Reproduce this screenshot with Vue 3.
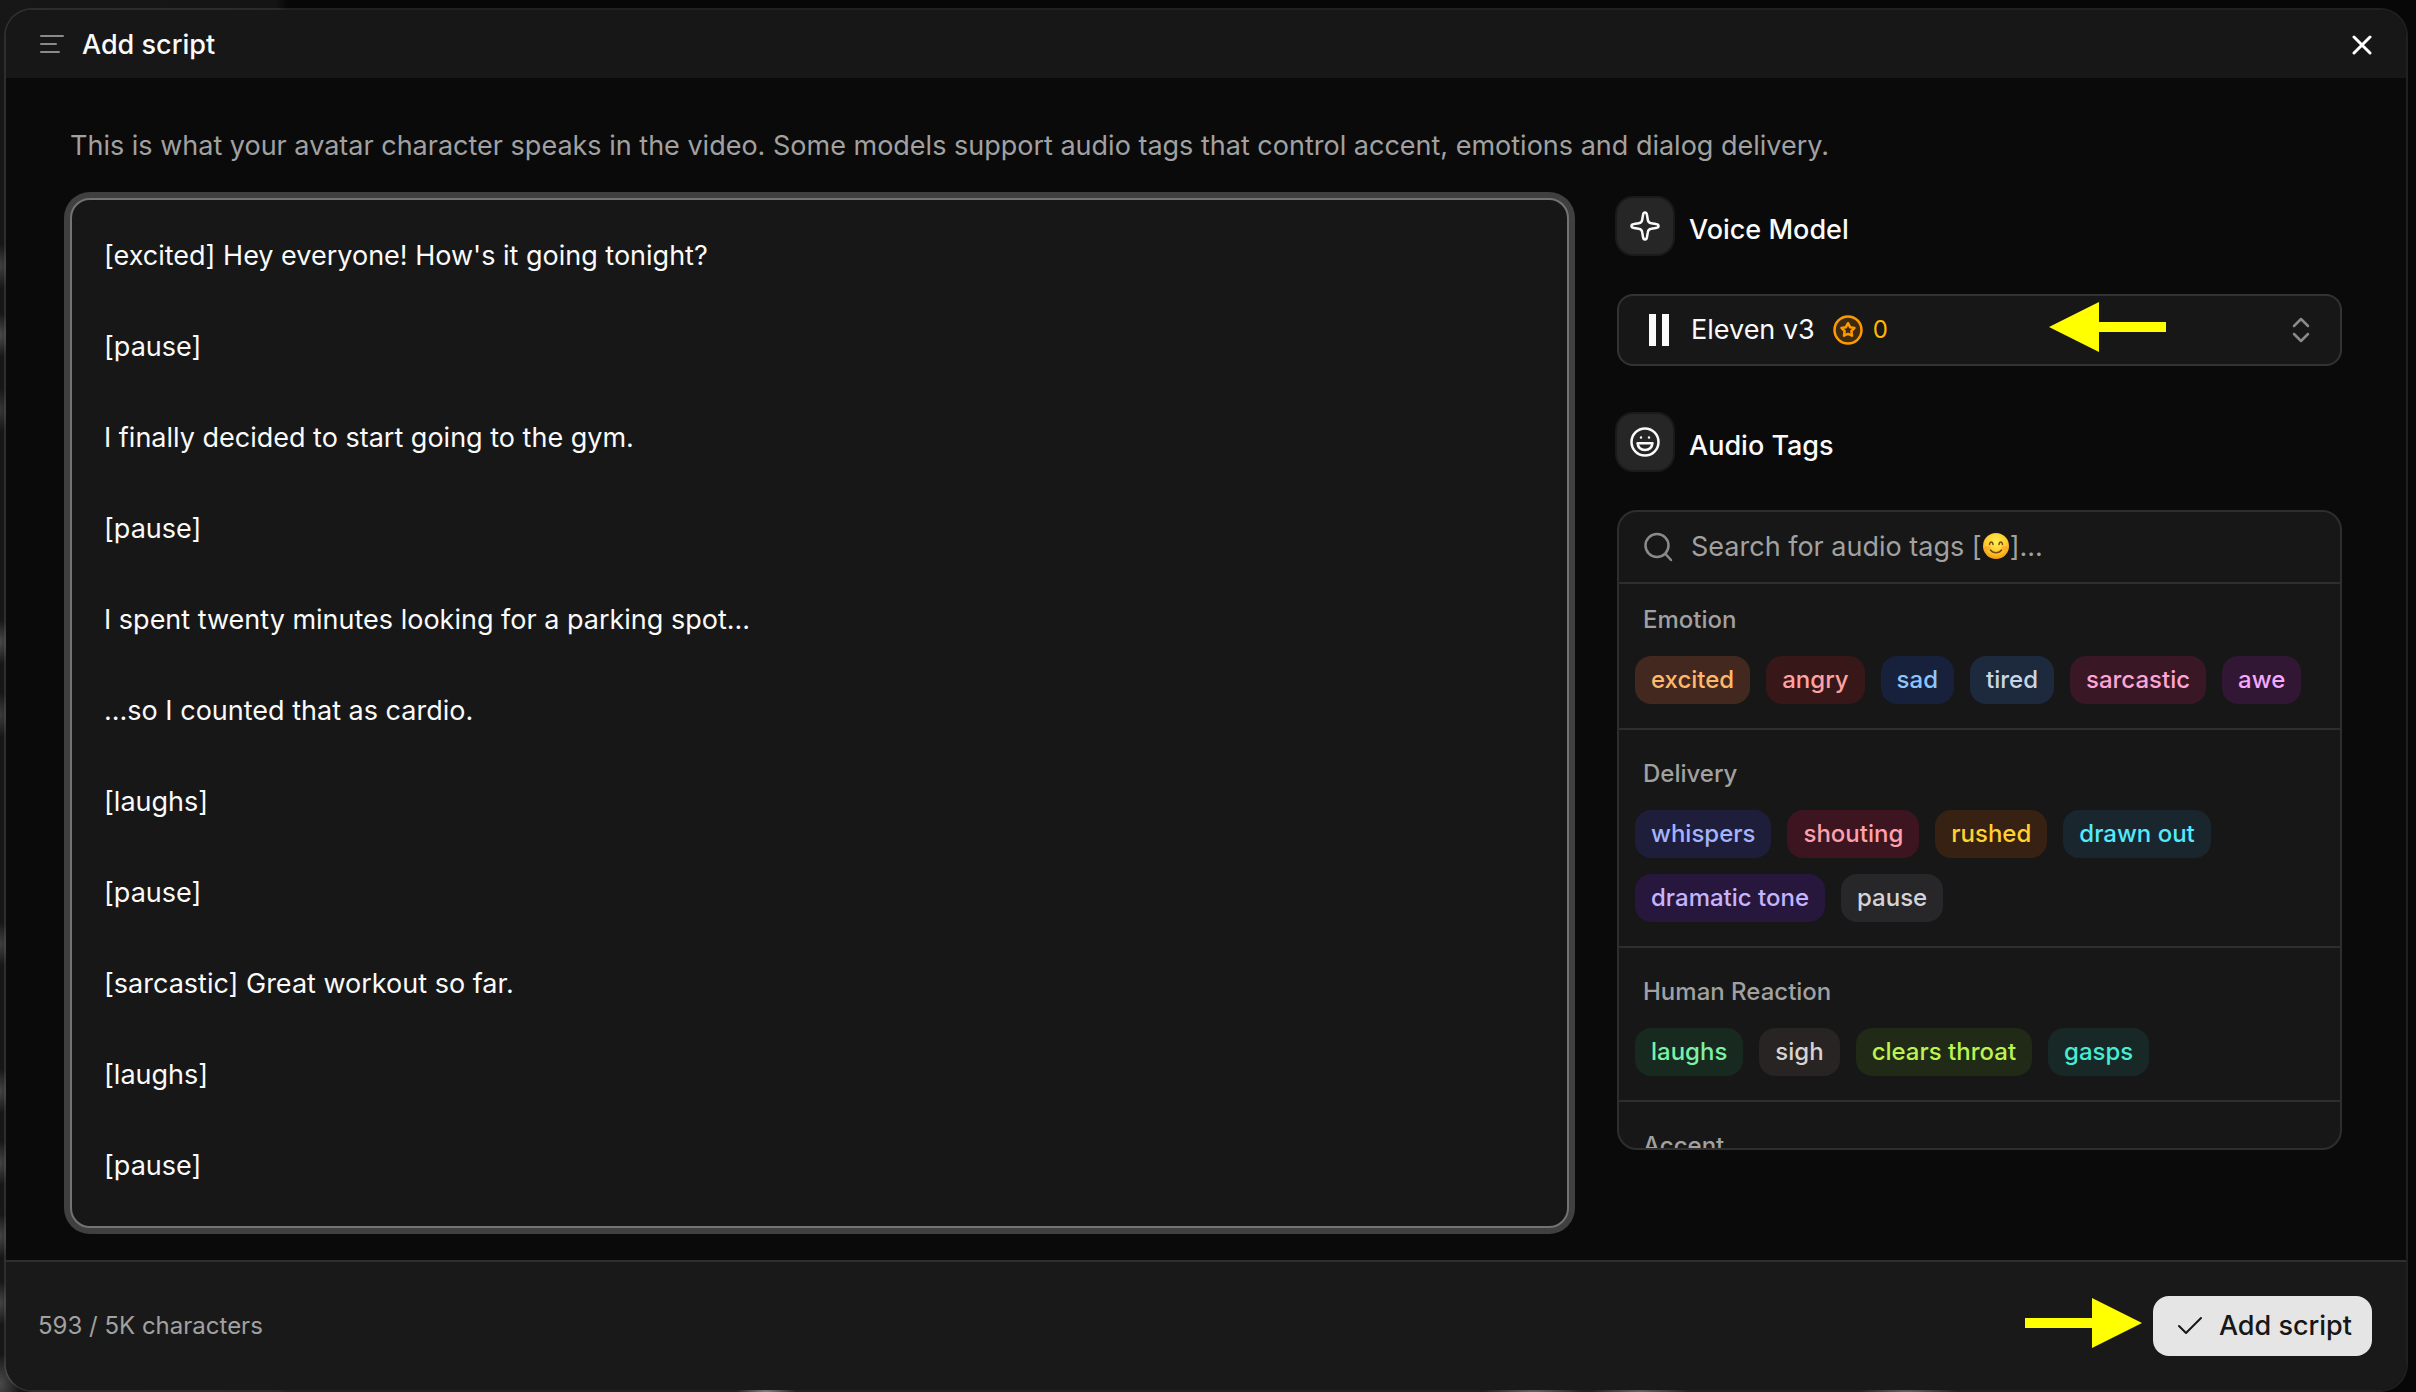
<script setup>
import { ref } from 'vue'

const script = ref([
  '[excited] Hey everyone! How\'s it going tonight?',
  '[pause]',
  'I finally decided to start going to the gym.',
  '[pause]',
  'I spent twenty minutes looking for a parking spot...',
  '...so I counted that as cardio.',
  '[laughs]',
  '[pause]',
  '[sarcastic] Great workout so far.',
  '[laughs]',
  '[pause]',
].join('\n'))

const query = ref('')

const groups = [
  { name: 'Emotion', tags: [['excited', 'orange'], ['angry', 'red'], ['sad', 'blue'], ['tired', 'slate'], ['sarcastic', 'pink'], ['awe', 'fuchsia']] },
  { name: 'Delivery', tags: [['whispers', 'indigo'], ['shouting', 'rose'], ['rushed', 'amber'], ['drawn out', 'cyan'], ['dramatic tone', 'violet'], ['pause', 'zinc']] },
  { name: 'Human Reaction', tags: [['laughs', 'green'], ['sigh', 'stone'], ['clears throat', 'lime'], ['gasps', 'teal']] },
  { name: 'Accent', tags: [] },
]
</script>

<template>
  <div class="backdrop">
    <section class="dialog" role="dialog" aria-labelledby="dialog-title">
      <header class="top">
        <svg class="menu" width="24" height="28" viewBox="0 0 24 28" aria-hidden="true">
          <path d="M1 5H23M1 13H16M1 21H19" />
        </svg>
        <h1 id="dialog-title">Add script</h1>
        <button class="close" type="button" aria-label="Close">
          <svg width="20" height="20" viewBox="0 0 20 20"><path d="M2 2L18 18M18 2L2 18" /></svg>
        </button>
      </header>

      <main class="body">
        <label class="intro" for="script">This is what your avatar character speaks in the video. Some models support audio tags that control accent, emotions and dialog delivery.</label>
        <div class="columns">
          <textarea id="script" v-model="script" class="editor" spellcheck="false"></textarea>

          <aside class="side">
            <div class="heading">
              <span class="badge">
                <svg width="32" height="32" viewBox="0 0 32 32" aria-hidden="true">
                  <path d="M16 2.500C17.300 2.500 17.800 3.600 18 5L18.800 9.800C19.100 12 20 12.900 22.200 13.200L27 14C28.400 14.200 29.500 14.700 29.500 16S28.400 17.800 27 18L22.200 18.800C20 19.100 19.100 20 18.800 22.200L18 27C17.800 28.400 17.300 29.500 16 29.500S14.200 28.400 14 27L13.200 22.200C12.900 20 12 19.100 9.800 18.800L5 18C3.600 17.800 2.500 17.300 2.500 16S3.600 14.200 5 14L9.800 13.200C12 12.900 12.900 12 13.200 9.800L14 5C14.200 3.600 14.700 2.500 16 2.500Z" />
                </svg>
              </span>
              <h2>Voice Model</h2>
            </div>

            <button class="model" type="button">
              <svg class="bars" width="20" height="32" viewBox="0 0 20 32" aria-hidden="true"><path d="M0 0H7V32H0ZM13 0H20V32H13Z" /></svg>
              <span>Eleven v3</span>
              <svg class="coin" width="30" height="30" viewBox="0 0 30 30" aria-hidden="true">
                <circle cx="15" cy="15" r="13.5" />
                <path d="M15 8.200L17.100 12.200L21.500 13L18.400 16.200L19 20.700L15 18.800L11 20.700L11.600 16.200L8.500 13L12.900 12.200Z" />
              </svg>
              <span class="cost">0</span>
              <svg class="updown" width="18" height="26" viewBox="0 0 18 26" aria-hidden="true"><path d="M2 9L9 2L16 9M2 17L9 24L16 17" /></svg>
              <svg class="pointer pointer-left" width="117" height="50" viewBox="0 0 117 50" aria-hidden="true"><path d="M0 25L50 0V20H117V30H50V50Z" /></svg>
            </button>

            <div class="heading">
              <span class="badge">
                <svg width="32" height="32" viewBox="0 0 32 32" aria-hidden="true">
                  <circle cx="16" cy="16" r="13.5" />
                  <path d="M8.500 17.200H23.500C23 21.500 20 24 16 24S9 21.500 8.500 17.200Z" />
                  <path d="M12 11.500V11.600M20 11.500V11.600" />
                </svg>
              </span>
              <h2>Audio Tags</h2>
            </div>

            <div class="panel">
              <div class="search">
                <svg class="lens" width="30" height="30" viewBox="0 0 30 30" aria-hidden="true"><circle cx="14" cy="13.5" r="11.5" /><path d="M22.500 22L28 28" /></svg>
                <div class="field">
                  <input v-model="query" type="text" aria-label="Search for audio tags" />
                  <span v-if="!query" class="hint">Search for audio tags [<svg width="28" height="28" viewBox="0 0 28 28" aria-hidden="true">
                    <defs>
                      <radialGradient id="face" cx="50%" cy="35%" r="65%">
                        <stop offset="0" stop-color="#ffee58" />
                        <stop offset="0.6" stop-color="#ffcd2e" />
                        <stop offset="1" stop-color="#f39a12" />
                      </radialGradient>
                    </defs>
                    <circle cx="14" cy="14" r="13" fill="url(#face)" />
                    <ellipse cx="5.5" cy="16" rx="3" ry="2" fill="#ff8a3c" opacity="0.5" />
                    <ellipse cx="22.5" cy="16" rx="3" ry="2" fill="#ff8a3c" opacity="0.5" />
                    <path d="M7.500 12.500C8 9 10.500 9 11 12.500M17 12.500C17.500 9 20 9 20.500 12.500M8.500 18C11 21.500 17 21.500 19.500 18" fill="none" stroke="#7a4a10" stroke-width="1.5" stroke-linecap="round" />
                  </svg>]...</span>
                </div>
              </div>
              <div class="groups">
                <section v-for="group in groups" :key="group.name" class="group">
                  <h3>{{ group.name }}</h3>
                  <div class="tags">
                    <button v-for="[label, tone] in group.tags" :key="label" type="button" class="tag" :class="tone">{{ label }}</button>
                  </div>
                </section>
              </div>
            </div>
          </aside>
        </div>
      </main>

      <footer class="bottom">
        <span class="count">593 / 5K characters</span>
        <button class="submit" type="button">
          <svg width="26" height="20" viewBox="0 0 26 20" aria-hidden="true"><path d="M2 10L9 17L24 2" /></svg>
          Add script
          <svg class="pointer pointer-right" width="117" height="50" viewBox="0 0 117 50" aria-hidden="true"><path d="M117 25L67 0V20H0V30H67V50Z" /></svg>
        </button>
      </footer>
    </section>
  </div>
</template>

<style>
body {
  margin: 0;
  background: #0a0a0a;
}
</style>

<style scoped>
* {
  box-sizing: border-box;
}

.backdrop {
  min-height: 100vh;
  display: flex;
  padding: 8px 8px 0 4px;
  font: 400 27px/40px Inter, "Liberation Sans", sans-serif;
  color: #fafafa;
  background:
    radial-gradient(ellipse 12px 22px at 0 266px, #404040, transparent),
    radial-gradient(ellipse 12px 22px at 0 335px, #4a4a4a, transparent),
    radial-gradient(ellipse 12px 22px at 0 410px, #363636, transparent),
    radial-gradient(ellipse 12px 22px at 0 642px, #4a4a4a, transparent),
    radial-gradient(ellipse 12px 22px at 0 715px, #3c3c3c, transparent),
    radial-gradient(ellipse 12px 22px at 0 944px, #404040, transparent),
    radial-gradient(ellipse 12px 22px at 0 1091px, #444, transparent),
    radial-gradient(ellipse 12px 22px at 0 1163px, #444, transparent),
    radial-gradient(ellipse 12px 22px at 0 1236px, #444, transparent),
    radial-gradient(ellipse 12px 22px at 0 1303px, #444, transparent),
    radial-gradient(ellipse 20px 30px at 0 1384px, #4a4a4a, transparent),
    radial-gradient(ellipse 30px 8px at 766px 100%, #777, transparent),
    radial-gradient(ellipse 50px 8px at 1533px 100%, #555, transparent),
    radial-gradient(ellipse 50px 8px at 1640px 100%, #555, transparent),
    radial-gradient(ellipse 50px 8px at 1907px 100%, #555, transparent),
    linear-gradient(90deg, #171717 0, #141414 276px, #070707 288px);
}

h1, h2, h3 {
  margin: 0;
  font-weight: 500;
  font-size: 27px;
}

button, input, textarea {
  font: inherit;
  color: inherit;
}

button {
  cursor: pointer;
}

svg {
  flex: none;
  fill: none;
  stroke-linecap: round;
  stroke-linejoin: round;
}

.dialog {
  flex: 1;
  min-width: 0;
  display: flex;
  flex-direction: column;
  border: 2px solid rgba(255, 255, 255, 0.1);
  border-radius: 28px;
  background: #0a0a0a;
  background-clip: padding-box;
  overflow: hidden;
}

.top {
  display: flex;
  align-items: center;
  gap: 18px;
  height: 68px;
  padding: 2px 30px 0 34px;
  background: #171717;
}

.menu {
  stroke: #8a8a8a;
  stroke-width: 2;
}

.close {
  margin-left: auto;
  display: flex;
  padding: 4px;
  border: 0;
  background: none;
  stroke: #fff;
  stroke-width: 3;
}

.body {
  flex: 1;
  padding: 48px 64px 32px;
}

.intro {
  display: block;
  margin-bottom: 32px;
  color: #a1a1a1;
}

.columns {
  display: flex;
  gap: 48px;
}

.editor {
  flex: 1;
  min-width: 0;
  height: 1030px;
  padding: 10px 32px;
  border: 2px solid #737373;
  border-radius: 20px;
  outline: 0;
  box-shadow: 0 0 0 6px #404040;
  background: #171717;
  line-height: 91px;
  resize: none;
  overflow: hidden;
}

.side {
  flex: none;
  width: 725px;
}

.heading {
  display: flex;
  align-items: flex-end;
  gap: 16px;
  height: 56px;
}

.heading h2 {
  line-height: 48px;
}

.badge {
  display: flex;
  align-items: center;
  justify-content: center;
  width: 56px;
  height: 56px;
  border-radius: 16px;
  box-shadow: 0 0 0 2px #1a1a1a;
  background: #262626;
  stroke: #fafafa;
  stroke-width: 2.5;
}

.model {
  position: relative;
  display: flex;
  align-items: center;
  width: 100%;
  height: 72px;
  margin: 40px 0 48px;
  padding: 0 30px;
  border: 2px solid #333;
  border-radius: 16px;
  background: #171717;
  text-align: left;
}

.bars {
  margin-right: 22px;
  fill: #fafafa;
}

.coin {
  margin: 0 10px 0 18px;
  fill: #3d2a10;
  stroke: #fe9a00;
  stroke-width: 2.5;
}

.cost {
  font-size: 24px;
  color: #ffb900;
}

.updown {
  margin-left: auto;
  stroke: #8a8a8a;
  stroke-width: 2.5;
}

.pointer {
  position: absolute;
  fill: #ff0;
}

.pointer-left {
  top: 6px;
  right: 174px;
}

.pointer-right {
  top: 2px;
  right: 230px;
}

.panel {
  height: 640px;
  margin-top: 40px;
  border: 2px solid #2e2e2e;
  border-radius: 20px;
  background: #171717;
  overflow: hidden;
}

.search {
  display: flex;
  align-items: center;
  gap: 18px;
  height: 72px;
  padding: 0 24px;
  border-bottom: 2px solid #2e2e2e;
}

.lens {
  stroke: #8a8a8a;
  stroke-width: 2.5;
}

.field {
  position: relative;
  flex: 1;
}

.field input {
  display: block;
  width: 100%;
  padding: 0;
  border: 0;
  outline: 0;
  background: none;
}

.hint {
  position: absolute;
  inset: 0;
  color: #a1a1a1;
  pointer-events: none;
}

.hint svg {
  vertical-align: -4px;
}

.group {
  padding: 28px 16px 24px;
  border-bottom: 2px solid #2e2e2e;
}

.group:first-child {
  padding-top: 20px;
}

.group h3 {
  margin: 0 8px 20px;
  font-size: 24px;
  line-height: 32px;
  color: #a1a1a1;
}

.tags {
  display: flex;
  flex-wrap: wrap;
  gap: 16px;
}

.tag {
  height: 48px;
  padding: 0 16px;
  border: 0;
  border-radius: 16px;
  font-size: 24px;
  font-weight: 500;
}

.orange { background: #42281e; color: #ffb86a; }
.red { background: #381719; color: #ffa2a2; }
.blue { background: #18213c; color: #8ec5ff; }
.slate { background: #1d293d; color: #cad5e2; }
.pink { background: #3a1725; color: #fda5d5; }
.fuchsia { background: #311734; color: #f4a8ff; }
.indigo { background: #1f1e3a; color: #a3b3ff; }
.rose { background: #3c1520; color: #ffa1ad; }
.amber { background: #362113; color: #ffd230; }
.cyan { background: #19262e; color: #53eafd; }
.violet { background: #28173d; color: #c4b4ff; }
.zinc { background: #27272a; color: #d4d4d8; }
.green { background: #18291f; color: #7bf1a8; }
.stone { background: #292424; color: #d6d3d1; }
.lime { background: #202a16; color: #bbf451; }
.teal { background: #182826; color: #46ecd5; }

.bottom {
  display: flex;
  align-items: center;
  justify-content: space-between;
  height: 130px;
  padding: 0 34px 0 32px;
  border-top: 2px solid #2e2e2e;
  background: #191919;
}

.count {
  font-size: 24px;
  color: #a1a1a1;
}

.submit {
  position: relative;
  display: flex;
  align-items: center;
  gap: 16px;
  height: 60px;
  padding: 0 20px 0 24px;
  border: 0;
  border-radius: 16px;
  background: #e5e5e5;
  color: #171717;
  font-weight: 500;
  stroke: #171717;
  stroke-width: 2;
}

.submit .pointer {
  stroke: none;
}
</style>
